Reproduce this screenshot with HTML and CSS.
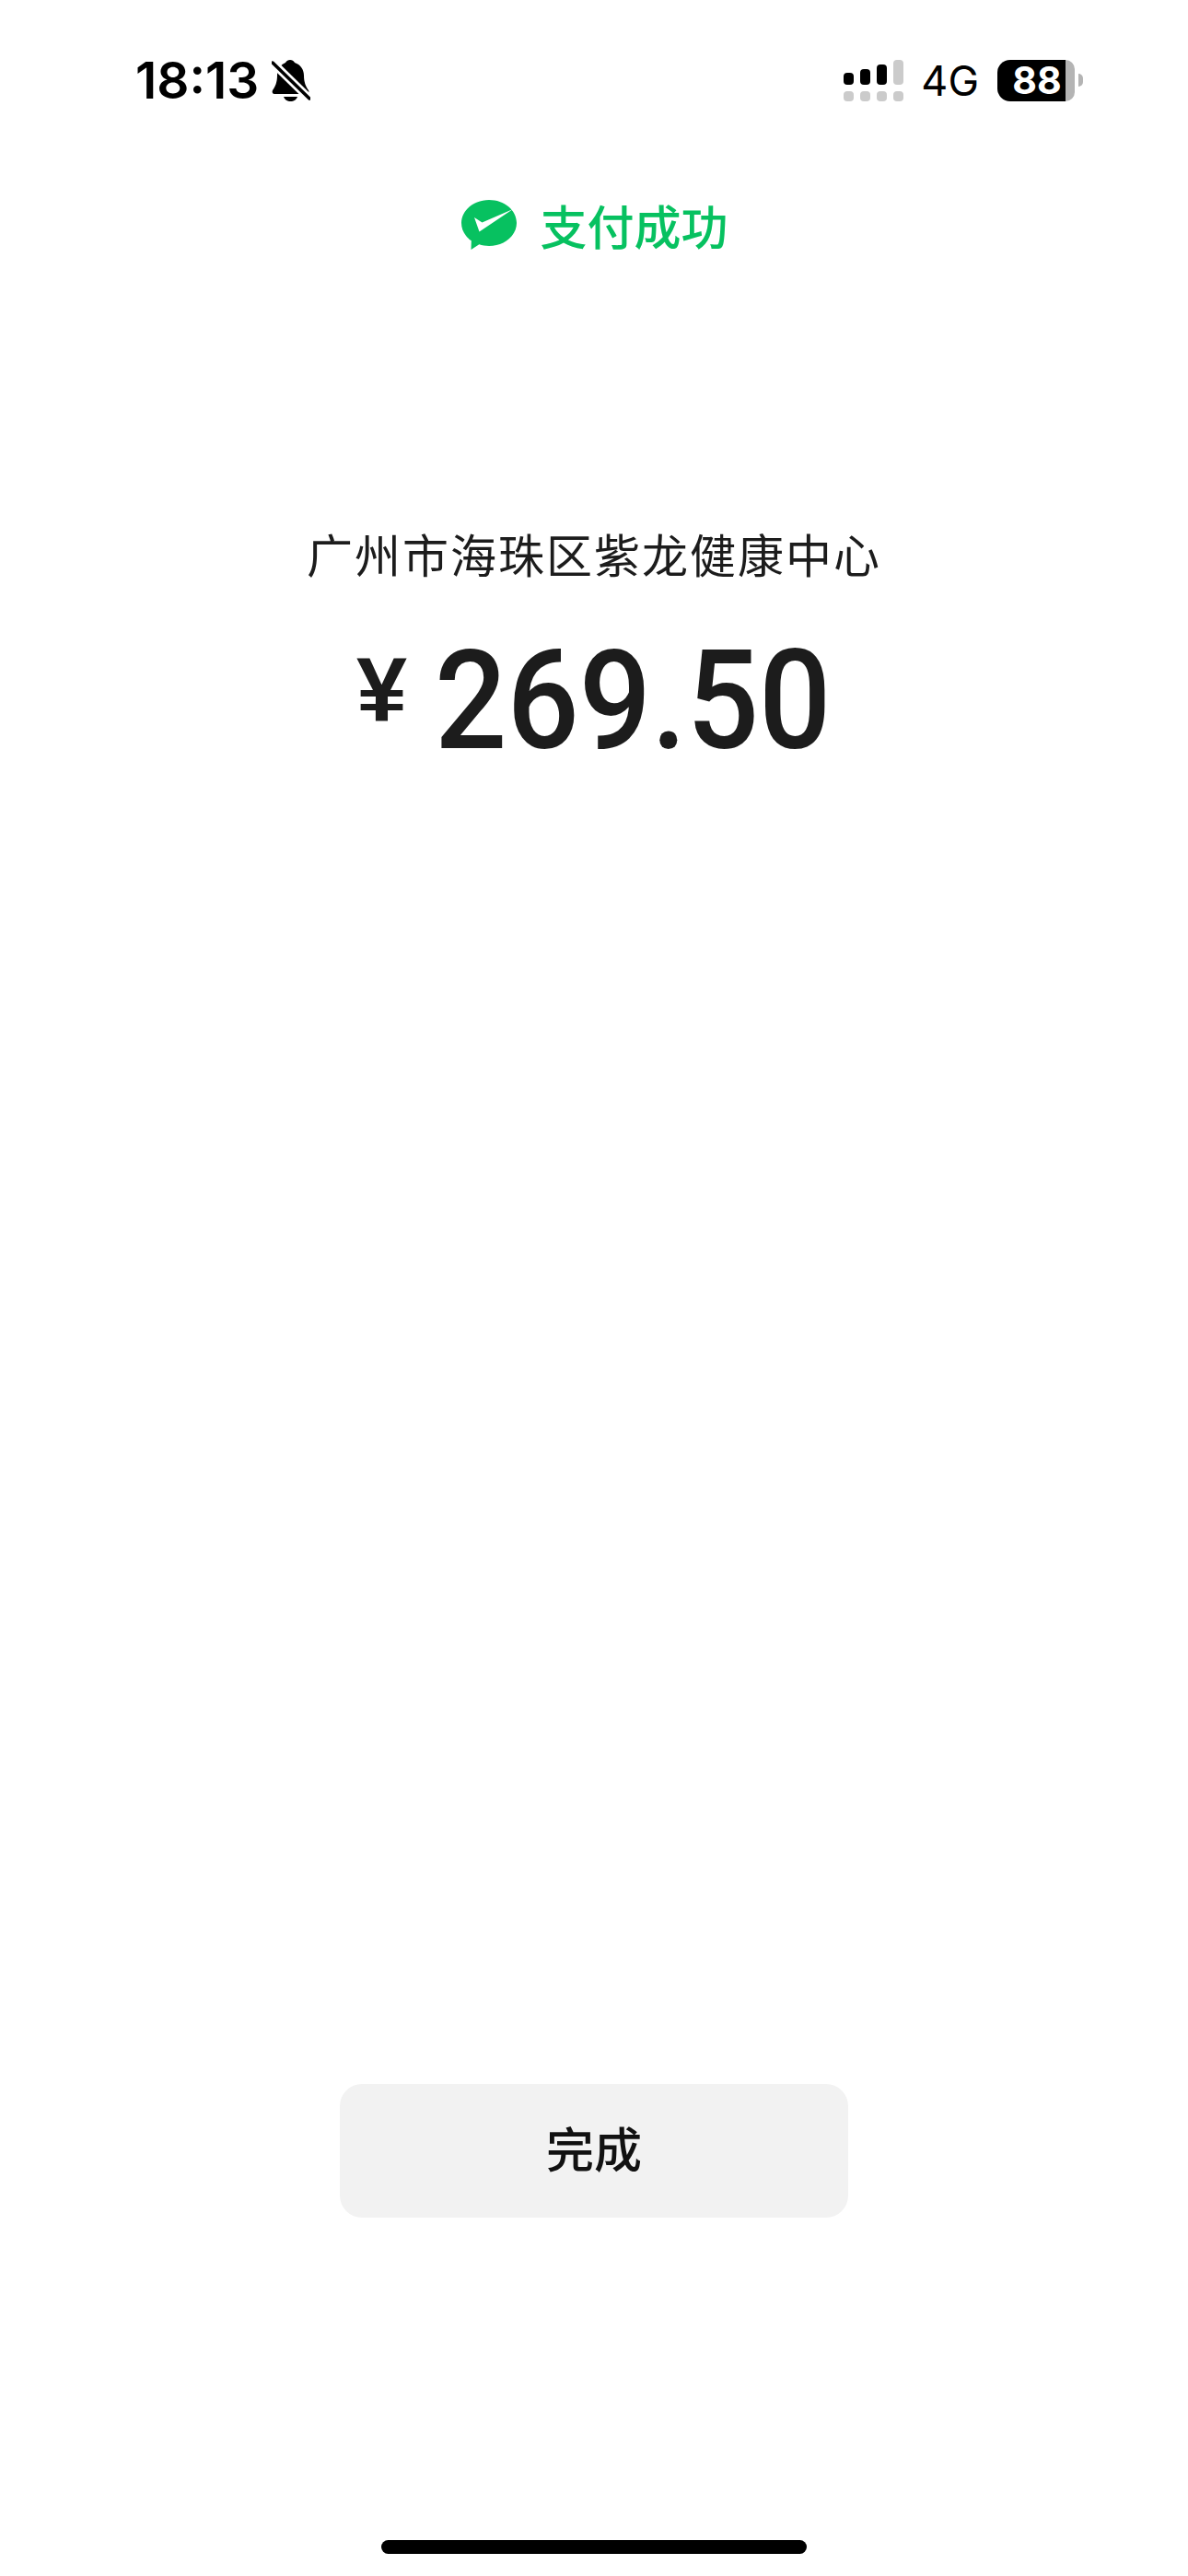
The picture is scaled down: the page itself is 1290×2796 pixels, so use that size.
FILE: index.html
```html
<!DOCTYPE html>
<html lang="zh-CN">
<head>
    <meta charset="UTF-8">
    <meta name="viewport" content="width=device-width, initial-scale=1.0">
    <title>支付成功</title>
    <link rel="stylesheet" href="styles.css">
</head>
<body>
    <div class="page">
        <!-- status bar -->
        <div class="status-bar">
            <div class="status-left">
                <span class="time">18:13</span>
                <svg class="bell" viewBox="0 0 42 45">
                    <path d="M20 0c2 0 4 1 5 3 6 2 10 7 10 14 0 7 2 12 5 16 1 2 0 4-2 4H3c-2 0-3-2-2-4 3-4 5-9 5-16 0-7 4-12 9-14 1-2 3-3 5-3z"/>
                    <path d="M13 40h15c-1 3-4 5-7.500 5s-6.500-2-7.500-5z"/>
                    <path class="bell-gap" d="M1 3l40 39"/>
                    <path class="bell-slash" d="M1 3l40 39"/>
                </svg>
            </div>
            <div class="status-right">
                <svg class="signal" viewBox="0 0 65 45">
                    <rect x="0" y="14" width="11" height="13" rx="4"/>
                    <rect x="18" y="10" width="11" height="17" rx="4"/>
                    <rect x="36" y="5" width="11" height="22" rx="4"/>
                    <rect class="off" x="54" y="0" width="11" height="27" rx="4"/>
                    <rect class="off" x="0" y="34" width="11" height="11" rx="4"/>
                    <rect class="off" x="18" y="34" width="11" height="11" rx="4"/>
                    <rect class="off" x="36" y="34" width="11" height="11" rx="4"/>
                    <rect class="off" x="54" y="34" width="11" height="11" rx="4"/>
                </svg>
                <span class="network">4G</span>
                <div class="battery">
                    <div class="battery-body">
                        <span class="battery-level">88</span>
                        <span class="battery-rest"></span>
                    </div>
                    <span class="battery-cap"></span>
                </div>
            </div>
        </div>

        <!-- result -->
        <div class="result-title">
            <svg class="wechat-logo" viewBox="0 0 60 54">
                <path class="logo-bubble" d="M30 0c16.600 0 30 11.200 30 25S46.600 50 30 50c-3.800 0-7.400-.6-10.700-1.700L10.500 54l.3-9.700C4.200 39.700 0 32.800 0 25 0 11.200 13.400 0 30 0z"/>
                <path class="logo-check" d="M14 19l8.500 5.500L56 10 19.500 34.500z"/>
            </svg>
            <span>支付成功</span>
        </div>

        <div class="merchant">广州市海珠区紫龙健康中心</div>
        <div class="amount">
            <span class="currency">¥</span>
            <span class="value">269.50</span>
        </div>

        <button class="done-btn">完成</button>
        <div class="home-bar"></div>
    </div>
</body>
</html>
```

FILE: styles.css
```css
* {
    box-sizing: border-box;
}

body {
    margin: 0;
    background-color: #fff;
    font-family: "Noto Sans CJK SC", sans-serif;
    color: #1c1c1c;
}

.page {
    display: flex;
    flex-direction: column;
    align-items: center;
    height: 2796px;
}

.status-bar {
    display: flex;
    justify-content: space-between;
    align-items: center;
    width: 100%;
    height: 110px;
    padding: 64px 114px 0 147px;
}

.status-left,
.status-right {
    display: flex;
    align-items: center;
}

.time {
    font-family: Inter, sans-serif;
    font-size: 55px;
    font-weight: 600;
    line-height: 46px;
    color: #000;
}

.bell {
    width: 42px;
    height: 45px;
    margin-left: 14px;
}

.bell-gap {
    fill: none;
    stroke: #fff;
    stroke-width: 9;
}

.bell-slash {
    fill: none;
    stroke: #000;
    stroke-width: 3.5;
    stroke-linecap: round;
}

.signal {
    width: 65px;
    height: 45px;
}

.signal .off {
    fill: #cbcbcb;
}

.network {
    margin-left: 19px;
    font-family: Inter, sans-serif;
    font-size: 45px;
    font-weight: 400;
    line-height: 45px;
    color: #000;
}

.battery {
    display: flex;
    align-items: center;
    margin-left: 20px;
}

.battery-body {
    display: flex;
    width: 84px;
    height: 45px;
}

.battery-level {
    width: 74px;
    padding-left: 12px;
    border-radius: 14px 0 0 14px;
    background-color: #000;
    color: #fff;
    font-family: Inter, sans-serif;
    font-size: 41px;
    font-weight: 700;
    line-height: 45px;
    text-align: center;
}

.battery-rest {
    flex: 1;
    border-radius: 0 14px 14px 0;
    background-color: #b4b4b4;
}

.battery-cap {
    width: 5px;
    height: 14px;
    margin-left: 4px;
    border-radius: 0 7px 7px 0;
    background-color: #b4b4b4;
}

.result-title {
    display: flex;
    align-items: center;
    margin-top: 106px;
    padding-left: 2px;
    color: #07c160;
    font-size: 51px;
    font-weight: 500;
    line-height: 56px;
}

.wechat-logo {
    width: 60px;
    height: 54px;
    margin-right: 25px;
}

.logo-bubble {
    fill: #07c160;
}

.logo-check {
    fill: #fff;
}

.merchant {
    margin-top: 293px;
    font-size: 50px;
    font-weight: 400;
    letter-spacing: 2px;
    line-height: 70px;
}

.amount {
    display: flex;
    align-items: center;
    gap: 30px;
    height: 180px;
    margin-top: 36px;
}

.currency {
    margin-bottom: 26px;
    font-family: "Liberation Sans", sans-serif;
    font-size: 99px;
    font-weight: 700;
}

/* DIN style digits: no such font here, so narrow Roboto */
.value {
    display: inline-block;
    margin-right: -37px;
    font-family: Roboto, sans-serif;
    font-size: 150px;
    font-weight: 500;
    transform: scaleX(0.92);
    transform-origin: left center;
}

.done-btn {
    width: 552px;
    height: 145px;
    margin-top: auto;
    padding-bottom: 10px;
    border: none;
    border-radius: 24px;
    background-color: #f2f2f2;
    color: #111;
    font-family: "Noto Sans CJK SC", sans-serif;
    font-size: 52px;
    font-weight: 500;
}

.home-bar {
    width: 462px;
    height: 15px;
    margin-top: 350px;
    margin-bottom: 24px;
    border-radius: 8px;
    background-color: #000;
}
```
